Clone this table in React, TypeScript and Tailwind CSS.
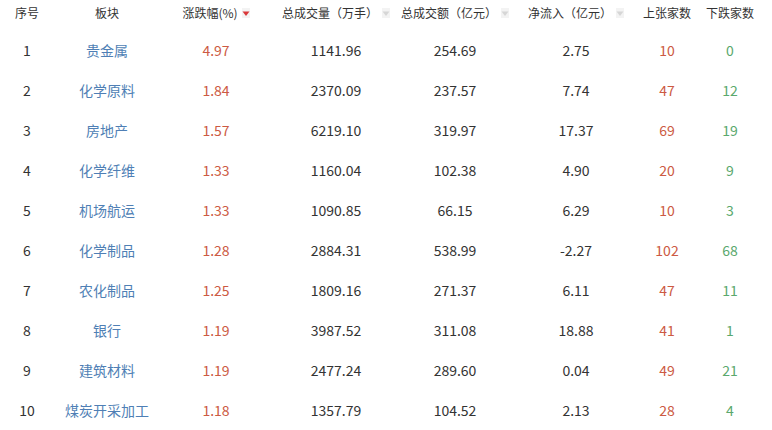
import React from "react";

type Row = [string, string, string, string, string, string, string, string];

const rows: Row[] = [
  ["1", "贵金属", "4.97", "1141.96", "254.69", "2.75", "10", "0"],
  ["2", "化学原料", "1.84", "2370.09", "237.57", "7.74", "47", "12"],
  ["3", "房地产", "1.57", "6219.10", "319.97", "17.37", "69", "19"],
  ["4", "化学纤维", "1.33", "1160.04", "102.38", "4.90", "20", "9"],
  ["5", "机场航运", "1.33", "1090.85", "66.15", "6.29", "10", "3"],
  ["6", "化学制品", "1.28", "2884.31", "538.99", "-2.27", "102", "68"],
  ["7", "农化制品", "1.25", "1809.16", "271.37", "6.11", "47", "11"],
  ["8", "银行", "1.19", "3987.52", "311.08", "18.88", "41", "1"],
  ["9", "建筑材料", "1.19", "2477.24", "289.60", "0.04", "49", "21"],
  ["10", "煤炭开采加工", "1.18", "1357.79", "104.52", "2.13", "28", "4"],
];

const cols = "grid grid-cols-[54px_106px_112px_128px_110px_132px_50px_76px]";

function SortIcon({ active }: { active?: boolean }) {
  return (
    <span className="ml-[4px] inline-flex h-[10px] w-[8px] items-end justify-center bg-[#f3f3f3]">
      <svg width="8" height="6" viewBox="0 0 8 6" className="mb-[1px]">
        <path d="M0.5 0.5 L7.5 0.5 L4 5 Z" fill={active ? "#d9383a" : "#d6d6d6"} />
      </svg>
    </span>
  );
}

export default function App() {
  return (
    <div
      className="w-[772px] h-[430px] bg-white text-[#333]"
      style={{ fontFamily: '"Noto Sans CJK SC", "Microsoft YaHei", sans-serif' }}
    >
      <div className={`${cols} h-[26px] items-center text-[12px] text-[#333]`}>
        <div className="text-center">序号</div>
        <div className="text-center">板块</div>
        <div className="flex items-center justify-center">
          <span>涨跌幅(%)</span>
          <SortIcon active />
        </div>
        <div className="flex items-center justify-center">
          <span>总成交量（万手）</span>
          <SortIcon />
        </div>
        <div className="flex items-center justify-center">
          <span>总成交额（亿元）</span>
          <SortIcon />
        </div>
        <div className="flex items-center justify-center">
          <span>净流入（亿元）</span>
          <SortIcon />
        </div>
        <div className="text-center whitespace-nowrap">上张家数</div>
        <div className="text-center whitespace-nowrap">下跌家数</div>
      </div>
      <div className="mt-[4px]">
        {rows.map((r) => (
          <div key={r[0]} className={`${cols} h-[40px] items-center text-[14px]`}>
            <div className="text-center text-[#333]">{r[0]}</div>
            <div className="text-center text-[#4f7fb5] whitespace-nowrap">{r[1]}</div>
            <div className="text-center text-[#cc5a43]">{r[2]}</div>
            <div className="text-center text-[#333]">{r[3]}</div>
            <div className="text-center text-[#333]">{r[4]}</div>
            <div className="text-center text-[#333]">{r[5]}</div>
            <div className="text-center text-[#cc5a43]">{r[6]}</div>
            <div className="text-center text-[#5aa86d]">{r[7]}</div>
          </div>
        ))}
      </div>
    </div>
  );
}
